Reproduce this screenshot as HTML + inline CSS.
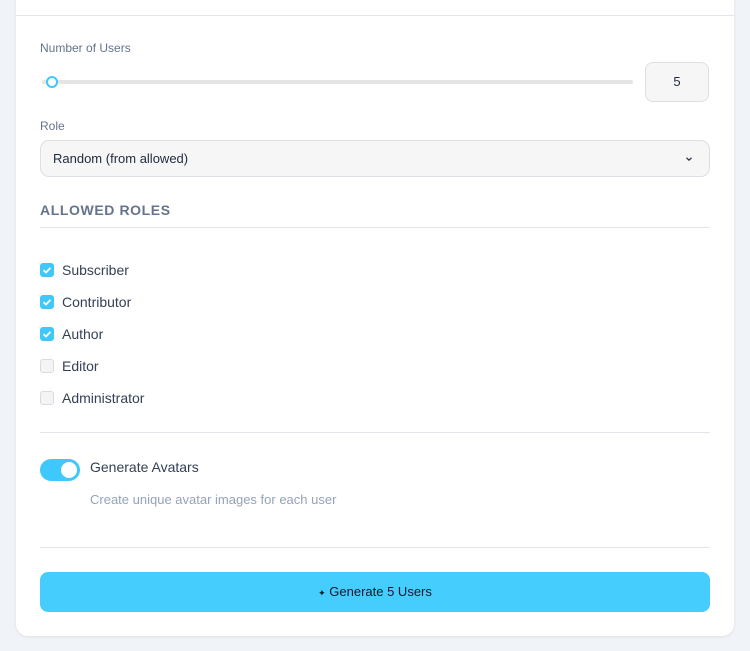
<!DOCTYPE html>
<html><head><meta charset="utf-8"><style>
*{box-sizing:border-box;margin:0;padding:0}
html,body{width:750px;height:651px;overflow:hidden}
body{background:#f0f3f7;font-family:"Liberation Sans",sans-serif;position:relative}
.outer{position:absolute;left:0;top:-20px;width:750px;height:671px;background:#f0f3f7;border-radius:16px}
.card{position:absolute;left:16px;top:-10px;width:718px;height:646px;background:#fff;border-radius:0 0 12px 12px;box-shadow:0 1px 3px rgba(0,0,0,.08)}
.abs{position:absolute}
.lbl{font-size:12px;color:#64748b}
.line{position:absolute;left:40px;width:670px;height:1px;background:#e2e5ea}
.cb{position:absolute;left:40px;width:14px;height:14px;border-radius:3px}
.on{background:#3fc8fb}
.off{background:#f4f4f5;border:1px solid #d8dadf}
.cbt{position:absolute;left:62px;font-size:14px;color:#334155}
</style></head><body>
<div class="outer"></div>
<div class="card"></div>
<div class="abs" style="left:16px;top:15px;width:718px;height:1px;background:#e2e5ea"></div>
<div class="abs lbl" style="left:40px;top:41px">Number of Users</div>
<div class="abs" style="left:42px;top:80px;width:591px;height:4px;background:#e5e5e5;border-radius:2px"></div>
<div class="abs" style="left:46px;top:76px;width:12px;height:12px;border:2px solid #3fc8fb;border-radius:50%;background:#fff"></div>
<div class="abs" style="left:645px;top:62px;width:64px;height:40px;border:1px solid #dcdfe4;border-radius:8px;background:#f6f6f6;font-size:13px;color:#1e293b;text-align:center;line-height:38px">5</div>
<div class="abs lbl" style="left:40px;top:119px">Role</div>
<div class="abs" style="left:40px;top:140px;width:670px;height:37px;border:1px solid #dcdfe4;border-radius:9px;background:#f6f6f6;font-size:13px;color:#1e293b;line-height:35px;padding-left:12px">Random (from allowed)
<svg style="position:absolute;right:15px;top:13px" width="10" height="10" viewBox="0 0 10 10"><path d="M2.5 3.8L5 6.2L7.5 3.8" fill="none" stroke="#1e293b" stroke-width="1.2"/></svg></div>
<div class="abs" style="left:40px;top:202px;font-size:14px;font-weight:bold;color:#64748b;letter-spacing:.6px">ALLOWED ROLES</div>
<div class="line" style="top:227px"></div>
<div class="cb on" style="top:263px"><svg width="14" height="14"><path d="M3.5 7.2L6 9.5L10.5 4.8" fill="none" stroke="#fff" stroke-width="1.8"/></svg></div><div class="cbt" style="top:262px">Subscriber</div>
<div class="cb on" style="top:295px"><svg width="14" height="14"><path d="M3.5 7.2L6 9.5L10.5 4.8" fill="none" stroke="#fff" stroke-width="1.8"/></svg></div><div class="cbt" style="top:294px">Contributor</div>
<div class="cb on" style="top:327px"><svg width="14" height="14"><path d="M3.5 7.2L6 9.5L10.5 4.8" fill="none" stroke="#fff" stroke-width="1.8"/></svg></div><div class="cbt" style="top:326px">Author</div>
<div class="cb off" style="top:359px"></div><div class="cbt" style="top:358px">Editor</div>
<div class="cb off" style="top:391px"></div><div class="cbt" style="top:390px">Administrator</div>
<div class="line" style="top:432px"></div>
<div class="abs" style="left:40px;top:459px;width:40px;height:22px;border-radius:11px;background:#3fc8fb"><div style="position:absolute;right:3px;top:3px;width:16px;height:16px;border-radius:50%;background:#fff"></div></div>
<div class="abs" style="left:90px;top:459px;font-size:14px;color:#334155">Generate Avatars</div>
<div class="abs" style="left:90px;top:492px;font-size:13px;color:#94a3b8">Create unique avatar images for each user</div>
<div class="line" style="top:547px"></div>
<div class="abs" style="left:40px;top:572px;width:670px;height:40px;border-radius:8px;background:#45cdfe;text-align:center;line-height:40px;font-size:13px;color:#0f172a"><span style="font-size:9px">✦</span> Generate 5 Users</div>
</body></html>
